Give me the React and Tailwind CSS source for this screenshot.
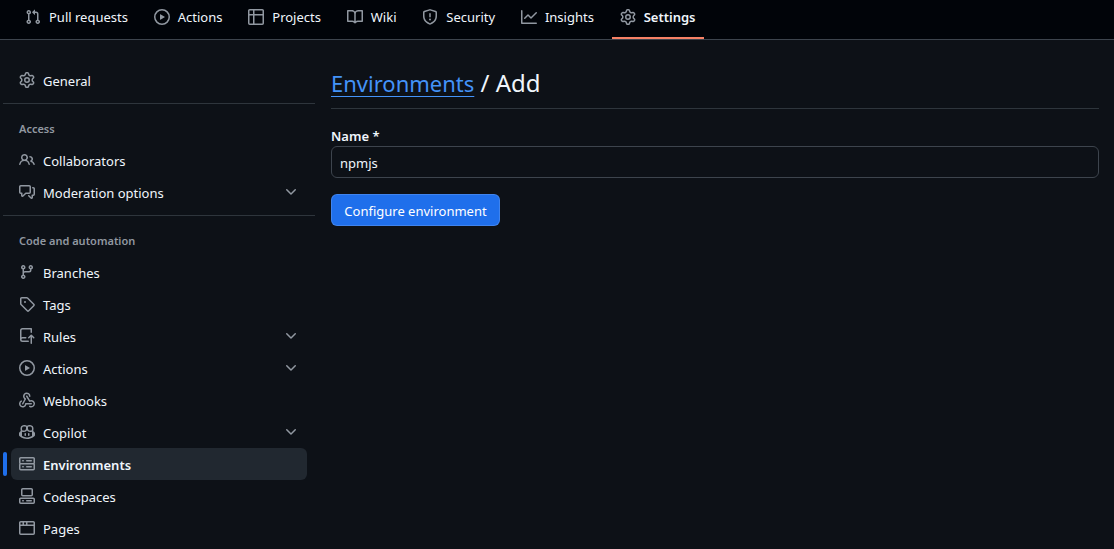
import React from 'react';

// 16px octicons, the 24px ones in react-icons come out too thin at this size
const paths = {
  pull: 'M1.5 3.25a2.25 2.25 0 1 1 3 2.122v5.256a2.251 2.251 0 1 1-1.5 0V5.372A2.25 2.25 0 0 1 1.5 3.25Zm5.677-.177L9.573.677A.25.25 0 0 1 10 .854V2.5h1A2.5 2.5 0 0 1 13.5 5v5.628a2.251 2.251 0 1 1-1.5 0V5a1 1 0 0 0-1-1h-1v1.646a.25.25 0 0 1-.427.177L7.177 3.427a.25.25 0 0 1 0-.354ZM3.75 2.5a.75.75 0 1 0 0 1.5.75.75 0 0 0 0-1.5Zm0 9.5a.75.75 0 1 0 0 1.5.75.75 0 0 0 0-1.5Zm8.25.75a.75.75 0 1 0 1.5 0 .75.75 0 0 0-1.5 0Z',
  play: 'M8 0a8 8 0 1 1 0 16A8 8 0 0 1 8 0ZM1.5 8a6.5 6.5 0 1 0 13 0 6.5 6.5 0 0 0-13 0Zm4.879-2.773 4.264 2.559a.25.25 0 0 1 0 .428l-4.264 2.559A.25.25 0 0 1 6 10.559V5.442a.25.25 0 0 1 .379-.215Z',
  table: 'M0 1.75C0 .784.784 0 1.75 0h12.5C15.216 0 16 .784 16 1.75v12.5A1.75 1.75 0 0 1 14.25 16H1.75A1.75 1.75 0 0 1 0 14.25ZM6.5 6.5v8h7.75a.25.25 0 0 0 .25-.25V6.5Zm8-1.5V1.75a.25.25 0 0 0-.25-.25H6.5V5Zm-13 1.5v7.75c0 .138.112.25.25.25H5v-8ZM5 5V1.5H1.75a.25.25 0 0 0-.25.25V5Z',
  book: 'M0 1.75A.75.75 0 0 1 .75 1h4.253c1.227 0 2.317.59 3 1.501A3.743 3.743 0 0 1 11.006 1h4.245a.75.75 0 0 1 .75.75v10.5a.75.75 0 0 1-.75.75h-4.507a2.25 2.25 0 0 0-1.591.659l-.622.621a.75.75 0 0 1-1.06 0l-.622-.621A2.25 2.25 0 0 0 5.258 13H.75a.75.75 0 0 1-.75-.75Zm7.251 10.324.004-5.073-.002-2.253A2.25 2.25 0 0 0 5.003 2.5H1.5v9h3.757a3.75 3.75 0 0 1 1.994.574ZM8.755 4.75l-.004 7.322a3.752 3.752 0 0 1 1.992-.572H14.5v-9h-3.495a2.25 2.25 0 0 0-2.25 2.25Z',
  shield: 'M7.467.133a1.748 1.748 0 0 1 1.066 0l5.25 1.68A1.75 1.75 0 0 1 15 3.48V7c0 1.566-.32 3.182-1.303 4.682-.983 1.498-2.585 2.813-5.032 3.855a1.697 1.697 0 0 1-1.33 0c-2.447-1.042-4.049-2.357-5.032-3.855C1.32 10.182 1 8.566 1 7V3.48a1.75 1.75 0 0 1 1.217-1.667Zm.61 1.429a.25.25 0 0 0-.153 0l-5.25 1.68a.25.25 0 0 0-.174.238V7c0 1.358.275 2.666 1.057 3.86.784 1.194 2.121 2.34 4.366 3.297a.196.196 0 0 0 .154 0c2.245-.956 3.582-2.104 4.366-3.298C13.225 9.666 13.5 8.36 13.5 7V3.48a.251.251 0 0 0-.174-.237l-5.25-1.68ZM8.75 4.75v3a.75.75 0 0 1-1.5 0v-3a.75.75 0 0 1 1.5 0ZM9 10.5a1 1 0 1 1-2 0 1 1 0 0 1 2 0Z',
  graph: 'M1.5 1.75V13.5h13.75a.75.75 0 0 1 0 1.5H.75a.75.75 0 0 1-.75-.75V1.75a.75.75 0 0 1 1.5 0Zm14.28 2.53-5.25 5.25a.75.75 0 0 1-1.06 0L7 7.06 4.28 9.78a.751.751 0 0 1-1.042-.018.751.751 0 0 1-.018-1.042l3.25-3.25a.75.75 0 0 1 1.06 0L10 7.94l4.72-4.72a.751.751 0 0 1 1.042.018.751.751 0 0 1 .018 1.042Z',
  gear: 'M8 0a8.2 8.2 0 0 1 .701.031C9.444.095 9.99.645 10.16 1.29l.288 1.107c.018.066.079.158.212.224.231.114.454.243.668.386.123.082.233.09.299.071l1.103-.303c.644-.176 1.392.021 1.82.63.27.385.506.792.704 1.218.315.675.111 1.422-.364 1.891l-.814.806c-.049.048-.098.147-.088.294.016.257.016.515 0 .772-.01.147.038.246.088.294l.814.806c.475.469.679 1.216.364 1.891a7.977 7.977 0 0 1-.704 1.217c-.428.61-1.176.807-1.82.63l-1.102-.302c-.067-.019-.177-.011-.3.071a5.909 5.909 0 0 1-.668.386c-.133.066-.194.158-.211.224l-.29 1.106c-.168.646-.715 1.196-1.458 1.26a8.006 8.006 0 0 1-1.402 0c-.743-.064-1.289-.614-1.458-1.26l-.289-1.106c-.018-.066-.079-.158-.212-.224a5.738 5.738 0 0 1-.668-.386c-.123-.082-.233-.09-.299-.071l-1.103.303c-.644.176-1.392-.021-1.82-.63a8.12 8.12 0 0 1-.704-1.218c-.315-.675-.111-1.422.363-1.891l.815-.806c.05-.048.098-.147.088-.294a6.214 6.214 0 0 1 0-.772c.01-.147-.038-.246-.088-.294l-.815-.806C.635 6.045.431 5.298.746 4.623a7.92 7.92 0 0 1 .704-1.217c.428-.61 1.176-.807 1.82-.63l1.102.302c.067.019.177.011.3-.071.214-.143.437-.272.668-.386.133-.066.194-.158.211-.224l.29-1.106C6.009.645 6.556.095 7.299.03 7.53.01 7.764 0 8 0Zm-.571 1.525c-.036.003-.108.036-.137.146l-.289 1.105c-.147.561-.549.967-.998 1.189-.173.086-.34.183-.5.29-.417.278-.97.423-1.529.27l-1.103-.303c-.109-.03-.175.016-.195.045-.22.312-.412.644-.573.99-.014.031-.021.11.059.19l.815.806c.411.406.562.957.53 1.456a4.709 4.709 0 0 0 0 .582c.032.499-.119 1.05-.53 1.456l-.815.806c-.081.08-.073.159-.059.19.162.346.353.677.573.989.02.03.085.076.195.046l1.102-.303c.56-.153 1.113-.008 1.53.27.161.107.328.204.501.29.447.222.85.629.997 1.189l.289 1.105c.029.109.101.143.137.146a6.6 6.6 0 0 0 1.142 0c.036-.003.108-.036.137-.146l.289-1.105c.147-.561.549-.967.998-1.189.173-.086.34-.183.5-.29.417-.278.97-.423 1.529-.27l1.103.303c.109.029.175-.016.195-.045.22-.313.411-.644.573-.99.014-.031.021-.11-.059-.19l-.815-.806c-.411-.406-.562-.957-.53-1.456a4.709 4.709 0 0 0 0-.582c-.032-.499.119-1.05.53-1.456l.815-.806c.081-.08.073-.159.059-.19a6.464 6.464 0 0 0-.573-.989c-.02-.03-.085-.076-.195-.046l-1.102.303c-.56.153-1.113.008-1.53-.27a4.44 4.44 0 0 0-.501-.29c-.447-.222-.85-.629-.997-1.189l-.289-1.105c-.029-.11-.101-.143-.137-.146a6.6 6.6 0 0 0-1.142 0ZM11 8a3 3 0 1 1-6 0 3 3 0 0 1 6 0ZM9.5 8a1.5 1.5 0 1 0-3.001.001A1.5 1.5 0 0 0 9.5 8Z',
  people: 'M2 5.5a3.5 3.5 0 1 1 5.898 2.549 5.508 5.508 0 0 1 3.034 4.084.75.75 0 1 1-1.482.235 4 4 0 0 0-7.9 0 .75.75 0 0 1-1.482-.236A5.507 5.507 0 0 1 3.102 8.05 3.493 3.493 0 0 1 2 5.5ZM11 4a3.001 3.001 0 0 1 2.22 5.018 5.01 5.01 0 0 1 2.56 3.012.749.749 0 0 1-.885.954.752.752 0 0 1-.549-.514 3.507 3.507 0 0 0-2.522-2.372.75.75 0 0 1-.574-.73v-.352a.75.75 0 0 1 .416-.672A1.5 1.5 0 0 0 11 5.5.75.75 0 0 1 11 4Zm-5.5-.5a2 2 0 1 0-.001 3.999A2 2 0 0 0 5.5 3.5Z',
  discussion: 'M1.75 1h8.5c.966 0 1.75.784 1.75 1.75v5.5A1.75 1.75 0 0 1 10.25 10H7.061l-2.574 2.573A1.458 1.458 0 0 1 2 11.543V10h-.25A1.75 1.75 0 0 1 0 8.25v-5.5C0 1.784.784 1 1.75 1ZM1.5 2.75v5.5c0 .138.112.25.25.25h1a.75.75 0 0 1 .75.75v2.19l2.72-2.72a.749.749 0 0 1 .53-.22h3.5a.25.25 0 0 0 .25-.25v-5.5a.25.25 0 0 0-.25-.25h-8.5a.25.25 0 0 0-.25.25Zm13 2a.25.25 0 0 0-.25-.25h-.5a.75.75 0 0 1 0-1.5h.5c.966 0 1.75.784 1.75 1.75v5.5A1.75 1.75 0 0 1 14.25 12H14v1.543a1.458 1.458 0 0 1-2.487 1.03L9.22 12.28a.749.749 0 0 1 .326-1.275.749.749 0 0 1 .734.215l2.22 2.22v-2.19a.75.75 0 0 1 .75-.75h1a.25.25 0 0 0 .25-.25Z',
  branch: 'M9.5 3.25a2.25 2.25 0 1 1 3 2.122V6A2.5 2.5 0 0 1 10 8.5H6a1 1 0 0 0-1 1v1.128a2.251 2.251 0 1 1-1.5 0V5.372a2.25 2.25 0 1 1 1.5 0v1.836A2.493 2.493 0 0 1 6 7h4a1 1 0 0 0 1-1v-.628A2.25 2.25 0 0 1 9.5 3.25Zm-6 0a.75.75 0 1 0 1.5 0 .75.75 0 0 0-1.5 0Zm8.25-.75a.75.75 0 1 0 0 1.5.75.75 0 0 0 0-1.5ZM4.25 12a.75.75 0 1 0 0 1.5.75.75 0 0 0 0-1.5Z',
  tag: 'M1 7.775V2.75C1 1.784 1.784 1 2.75 1h5.025c.464 0 .91.184 1.238.513l6.25 6.25a1.75 1.75 0 0 1 0 2.474l-5.026 5.026a1.75 1.75 0 0 1-2.474 0l-6.25-6.25A1.752 1.752 0 0 1 1 7.775Zm1.5 0c0 .066.026.13.073.177l6.25 6.25a.25.25 0 0 0 .354 0l5.025-5.025a.25.25 0 0 0 0-.354l-6.25-6.25a.25.25 0 0 0-.177-.073H2.75a.25.25 0 0 0-.25.25ZM6 5a1 1 0 1 1 0 2 1 1 0 0 1 0-2Z',
  push: 'M1 2.5A2.5 2.5 0 0 1 3.5 0h8.75a.75.75 0 0 1 .75.75v3.5a.75.75 0 0 1-1.5 0V1.5h-8a1 1 0 0 0-1 1v6.708A2.493 2.493 0 0 1 3.5 9h3.25a.75.75 0 0 1 0 1.5H3.5a1 1 0 0 0 0 2h5.75a.75.75 0 0 1 0 1.5H3.5A2.5 2.5 0 0 1 1 11.5Zm13.23 7.79h-.001l-1.224-1.224v6.184a.75.75 0 0 1-1.5 0V9.066L10.28 10.29a.75.75 0 0 1-1.06-1.061l2.505-2.504a.75.75 0 0 1 1.06 0L15.29 9.23a.751.751 0 0 1-.018 1.042.751.751 0 0 1-1.042.018Z',
  webhook: 'M5.5 4.25a2.25 2.25 0 0 1 4.5 0 .75.75 0 0 0 1.5 0 3.75 3.75 0 1 0-6.14 2.889l-2.272 4.258a.75.75 0 0 0 1.324.706L7 7.25a.75.75 0 0 0-.309-1.015A2.25 2.25 0 0 1 5.5 4.25Z M7.364 3.607a.75.75 0 0 1 1.03.257l2.608 4.349a3.75 3.75 0 1 1-.628 6.785.75.75 0 0 1 .752-1.299 2.25 2.25 0 1 0-.033-3.88.75.75 0 0 1-1.03-.256L7.107 4.636a.75.75 0 0 1 .257-1.03Z M2.9 8.776A.75.75 0 0 1 2.625 9.8 2.25 2.25 0 1 0 6 11.75a.75.75 0 0 1 .75-.751h5.5a.75.75 0 0 1 0 1.5H7.425a3.751 3.751 0 1 1-5.55-3.998.75.75 0 0 1 1.024.274Z',
  copilot: 'M7.998 15.035c-4.562 0-7.873-2.914-7.998-3.749V9.338c.085-.628.677-1.686 1.588-2.065.013-.07.024-.143.036-.218.029-.183.06-.384.126-.612-.201-.508-.254-1.084-.254-1.656 0-.87.128-1.769.693-2.484.579-.733 1.494-1.124 2.724-1.261 1.206-.134 2.262.034 2.944.765.05.053.096.108.139.165.044-.057.094-.112.143-.165.682-.731 1.738-.899 2.944-.765 1.23.137 2.145.528 2.724 1.261.566.715.693 1.614.693 2.484 0 .572-.053 1.148-.254 1.656.066.228.098.429.126.612.012.076.024.148.037.218.924.385 1.522 1.471 1.591 2.095v1.872c0 .766-3.351 3.795-8.002 3.795Zm0-1.485c2.28 0 4.584-1.11 5.002-1.433V7.862l-.023-.116c-.49.21-1.075.291-1.727.291-1.146 0-2.059-.327-2.71-.991A3.222 3.222 0 0 1 8 6.303a3.24 3.24 0 0 1-.544.743c-.65.664-1.563.991-2.71.991-.652 0-1.236-.081-1.727-.291l-.023.116v4.255c.419.323 2.722 1.433 5.002 1.433ZM6.762 2.83c-.193-.206-.637-.413-1.682-.297-1.019.113-1.479.404-1.713.7-.247.312-.369.789-.369 1.554 0 .793.129 1.171.308 1.371.162.181.519.379 1.442.379.853 0 1.339-.235 1.638-.54.315-.322.527-.827.617-1.553.117-.935-.037-1.395-.241-1.614Zm4.155-.297c-1.044-.116-1.488.091-1.681.297-.204.219-.359.679-.242 1.614.091.726.303 1.231.618 1.553.299.305.784.54 1.638.54.922 0 1.28-.198 1.442-.379.179-.2.308-.578.308-1.371 0-.765-.123-1.242-.37-1.554-.233-.296-.693-.587-1.713-.7Z M6.25 9.037a.75.75 0 0 1 .75.75v1.501a.75.75 0 0 1-1.5 0V9.787a.75.75 0 0 1 .75-.75Zm4.25.75v1.501a.75.75 0 0 1-1.5 0V9.787a.75.75 0 0 1 1.5 0Z',
  server: 'M1.75 1h12.5c.966 0 1.75.784 1.75 1.75v4c0 .372-.116.717-.314 1 .198.283.314.628.314 1v4a1.75 1.75 0 0 1-1.75 1.75H1.75A1.75 1.75 0 0 1 0 12.75v-4c0-.358.109-.707.314-1a1.739 1.739 0 0 1-.314-1v-4C0 1.784.784 1 1.75 1ZM1.5 2.75v4c0 .138.112.25.25.25h12.5a.25.25 0 0 0 .25-.25v-4a.25.25 0 0 0-.25-.25H1.75a.25.25 0 0 0-.25.25Zm.25 5.75a.25.25 0 0 0-.25.25v4c0 .138.112.25.25.25h12.5a.25.25 0 0 0 .25-.25v-4a.25.25 0 0 0-.25-.25ZM7 4.75A.75.75 0 0 1 7.75 4h4.5a.75.75 0 0 1 0 1.5h-4.5A.75.75 0 0 1 7 4.75ZM7.75 10h4.5a.75.75 0 0 1 0 1.5h-4.5a.75.75 0 0 1 0-1.5ZM3 4.75A.75.75 0 0 1 3.75 4h.5a.75.75 0 0 1 0 1.5h-.5A.75.75 0 0 1 3 4.75ZM3.75 10h.5a.75.75 0 0 1 0 1.5h-.5a.75.75 0 0 1 0-1.5Z',
  codespaces: 'M0 11.25c0-.966.784-1.75 1.75-1.75h12.5c.966 0 1.75.784 1.75 1.75v3A1.75 1.75 0 0 1 14.25 16H1.75A1.75 1.75 0 0 1 0 14.25Zm2-9.5C2 .784 2.784 0 3.75 0h8.5C13.216 0 14 .784 14 1.75v5a1.75 1.75 0 0 1-1.75 1.75h-8.5A1.75 1.75 0 0 1 2 6.75Zm1.75-.25a.25.25 0 0 0-.25.25v5c0 .138.112.25.25.25h8.5a.25.25 0 0 0 .25-.25v-5a.25.25 0 0 0-.25-.25Zm-2 9.5a.25.25 0 0 0-.25.25v3c0 .138.112.25.25.25h12.5a.25.25 0 0 0 .25-.25v-3a.25.25 0 0 0-.25-.25Z M7 12.75a.75.75 0 0 1 .75-.75h4.5a.75.75 0 0 1 0 1.5h-4.5a.75.75 0 0 1-.75-.75Zm-4 0a.75.75 0 0 1 .75-.75h.5a.75.75 0 0 1 0 1.5h-.5a.75.75 0 0 1-.75-.75Z',
  browser: 'M0 2.75C0 1.784.784 1 1.75 1h12.5c.966 0 1.75.784 1.75 1.75v10.5A1.75 1.75 0 0 1 14.25 15H1.75A1.75 1.75 0 0 1 0 13.25ZM14.5 6h-13v7.25c0 .138.112.25.25.25h12.5a.25.25 0 0 0 .25-.25Zm-6-3.5v2h6V2.75a.25.25 0 0 0-.25-.25ZM5 2.5v2h2v-2Zm-3.25 0a.25.25 0 0 0-.25.25V4.5h2v-2Z',
  chevron: 'M12.78 5.22a.749.749 0 0 1 0 1.06l-4.25 4.25a.749.749 0 0 1-1.06 0L3.22 6.28a.749.749 0 1 1 1.06-1.06L8 8.939l3.72-3.719a.749.749 0 0 1 1.06 0Z',
};

const Icon = ({ name, className = '' }) => (
  <svg
    viewBox="0 0 16 16"
    fill="currentColor"
    className={`h-4 w-4 shrink-0 text-[#9198a1] ${className}`}
  >
    <path d={paths[name]} />
  </svg>
);

const tabs = [
  { label: 'Pull requests', icon: 'pull' },
  { label: 'Actions', icon: 'play' },
  { label: 'Projects', icon: 'table' },
  { label: 'Wiki', icon: 'book' },
  { label: 'Security', icon: 'shield' },
  { label: 'Insights', icon: 'graph' },
  { label: 'Settings', icon: 'gear', active: true },
];

const SideItem = ({ icon, label, chevron, active }) => (
  <div className="relative">
    {active && (
      <span className="absolute -left-2 top-1 h-6 w-1 rounded-md bg-[#1f6feb]" />
    )}
    <div
      className={`flex h-8 items-center rounded-md px-2 text-[#f0f6fc] ${
        active ? 'bg-[#212830] font-semibold' : ''
      }`}
    >
      <Icon name={icon} className="mr-2" />
      <span className="flex-1 pt-[3px]">{label}</span>
      {chevron && <Icon name="chevron" />}
    </div>
  </div>
);

const SideHeading = ({ children }) => (
  <div className="flex h-8 items-center px-2 pt-[2px] text-[11px] font-semibold text-[#9198a1]">
    {children}
  </div>
);

const Divider = () => <div className="-mx-2 mb-2 mt-[7px] h-px bg-[#3d444db3]" />;

export default function App() {
  return (
    <div className="h-screen overflow-hidden bg-[#0d1117] font-['Noto_Sans',sans-serif] text-[13px] text-[#f0f6fc]">
      {/* Repo tabs */}
      <nav className="flex h-10 items-stretch gap-[9.8px] border-b border-[#3d444d] bg-[#010409] pl-[17px]">
        {tabs.map(({ label, icon, active }) => (
          <div
            key={label}
            className={`flex items-center border-b-2 px-2 pb-1 ${
              active ? 'border-[#f78166] font-semibold' : 'border-transparent'
            }`}
          >
            <Icon name={icon} className="mr-2" />
            <span className="pt-[2px]">{label}</span>
          </div>
        ))}
      </nav>

      <div className="flex">
        {/* Settings sidebar */}
        <aside className="ml-[11px] mt-6 w-[296px] shrink-0">
          <SideItem icon="gear" label="General" />
          <Divider />
          <SideHeading>Access</SideHeading>
          <SideItem icon="people" label="Collaborators" />
          <SideItem icon="discussion" label="Moderation options" chevron />
          <Divider />
          <SideHeading>Code and automation</SideHeading>
          <SideItem icon="branch" label="Branches" />
          <SideItem icon="tag" label="Tags" />
          <SideItem icon="push" label="Rules" chevron />
          <SideItem icon="play" label="Actions" chevron />
          <SideItem icon="webhook" label="Webhooks" />
          <SideItem icon="copilot" label="Copilot" chevron />
          <SideItem icon="server" label="Environments" active />
          <SideItem icon="codespaces" label="Codespaces" />
          <SideItem icon="browser" label="Pages" />
        </aside>

        {/* Main form */}
        <main className="ml-6 mr-[15px] mt-6 flex-1">
          <div className="flex h-[45px] items-baseline border-b border-[#3d444db3] pt-[1px] text-[24px]">
            <a className="text-[22px] text-[#4493f8] underline decoration-1 underline-offset-4">
              Environments
            </a>
            <span className="whitespace-pre"> / Add</span>
          </div>
          <label className="mt-[17px] block h-5 font-semibold leading-5">Name *</label>
          <input
            readOnly
            value="npmjs"
            className="block h-8 w-full rounded-md border border-[#3d444d] bg-[#0d1117] px-2 pt-[2px] text-[#f0f6fc] outline-none"
          />
          <button className="mt-4 h-8 w-[169px] rounded-md border border-[#ffffff26] bg-[#1f6feb] pt-[3px] text-white">
            Configure environment
          </button>
        </main>
      </div>
    </div>
  );
}
